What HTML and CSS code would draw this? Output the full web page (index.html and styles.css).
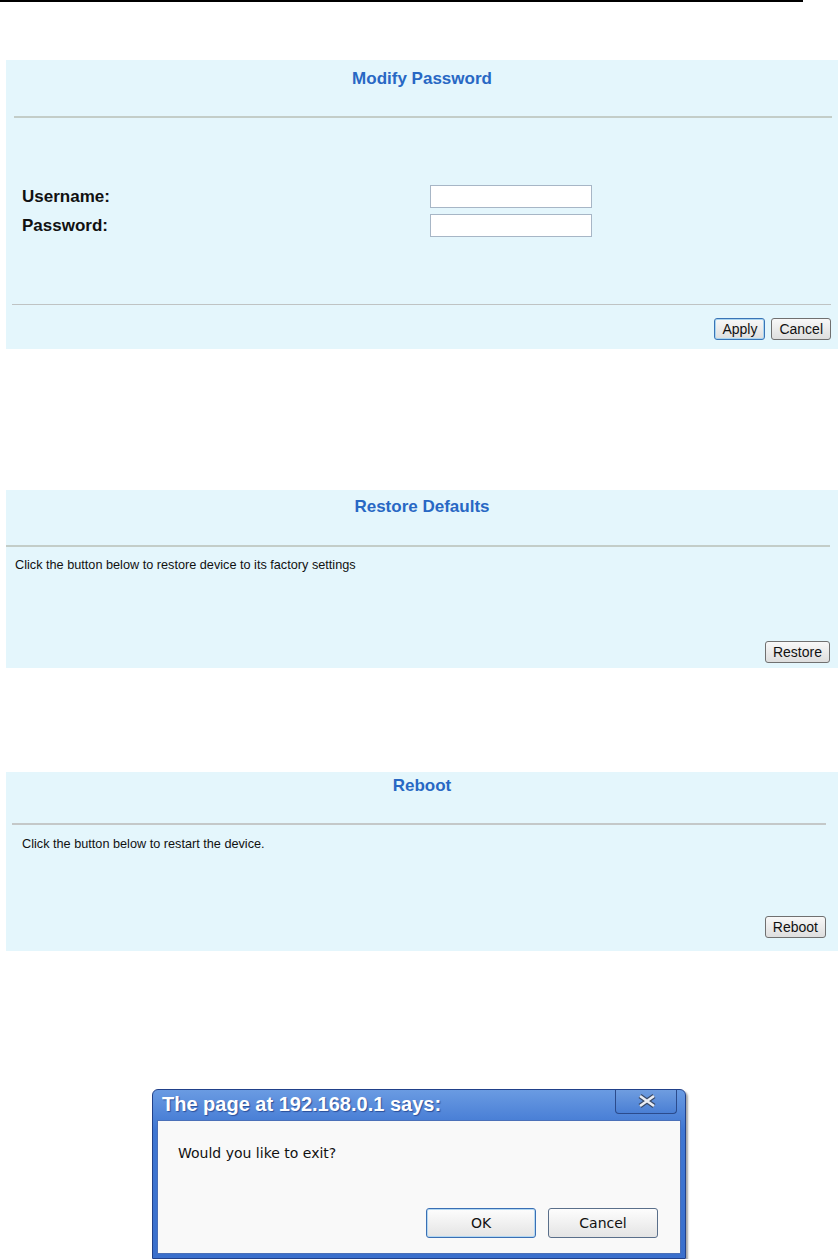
FILE: index.html
```html
<!DOCTYPE html>
<html>
<head>
    <title>Device Settings</title>
    <link rel="stylesheet" href="styles.css">
</head>
<body>
    <div class="page-rule"></div>

    <div class="panel panel-password">
        <div class="panel-title">Modify Password</div>
        <div class="divider divider-head"></div>
        <form class="field-grid" onsubmit="return false">
            <label for="username">Username:</label>
            <input type="text" id="username" name="username">
            <label for="password">Password:</label>
            <input type="password" id="password" name="password">
        </form>
        <div class="divider divider-foot"></div>
        <div class="panel-actions">
            <button class="btn btn-default">Apply</button>
            <button class="btn">Cancel</button>
        </div>
    </div>

    <div class="panel panel-restore">
        <div class="panel-title">Restore Defaults</div>
        <div class="divider"></div>
        <p class="panel-text">Click the button below to restore device to its factory settings</p>
        <div class="panel-actions">
            <button class="btn">Restore</button>
        </div>
    </div>

    <div class="panel panel-reboot">
        <div class="panel-title">Reboot</div>
        <div class="divider"></div>
        <p class="panel-text">Click the button below to restart the device.</p>
        <div class="panel-actions">
            <button class="btn">Reboot</button>
        </div>
    </div>

    <div class="dialog">
        <div class="dialog-title">
            <span>The page at 192.168.0.1 says:</span>
            <button class="dialog-close">
                <svg width="62" height="24" viewBox="0 0 62 24">
                    <path d="M24 6 L38 16 M38 6 L24 16" stroke="#3a4a68" stroke-width="5" fill="none"/>
                    <path d="M24 6 L38 16 M38 6 L24 16" stroke="#e9edf5" stroke-width="2.6" fill="none"/>
                </svg>
            </button>
        </div>
        <div class="dialog-body">
            <p class="dialog-message">Would you like to exit?</p>
            <div class="dialog-actions">
                <button class="dlg-btn dlg-btn-default">OK</button>
                <button class="dlg-btn">Cancel</button>
            </div>
        </div>
    </div>
</body>
</html>
```

FILE: styles.css
```css
body {
    margin: 0;
    background-color: #fff;
    font-family: 'Liberation Sans', Arial, sans-serif;
    color: #111;
}

.page-rule {
    width: 803px;
    border-top: 2px solid #000;
}

.panel {
    background-color: #e4f6fc;
    margin-left: 6px;
    width: 832px;
}

.panel-title {
    color: #2868c4;
    font-weight: bold;
    font-size: 17px;
    line-height: 20px;
    text-align: center;
}

.divider {
    height: 2px;
    background-color: #c3cdc8;
}

.panel-text {
    margin: 0;
    font-size: 12.7px;
    line-height: 16px;
    color: #111;
}

.panel-actions {
    display: flex;
    justify-content: flex-end;
    gap: 6px;
}

/* modify password */
.panel-password {
    margin-top: 58px;
    padding-top: 9px;
    padding-bottom: 9px;
}

.panel-password .divider-head {
    margin: 27px 6px 0 8px;
}

.field-grid {
    display: grid;
    grid-template-columns: 408px 162px;
    row-gap: 6px;
    align-items: center;
    padding: 67px 0 0 16px;
    margin: 0;
}

.field-grid label {
    font-weight: bold;
    font-size: 17px;
    color: #111;
}

.field-grid input {
    width: 162px;
    height: 23px;
    box-sizing: border-box;
    border: 1px solid #a7b6c6;
    background-color: #fff;
    margin: 0;
}

.panel-password .divider-foot {
    height: 1px;
    background-color: #bfc3c3;
    margin: 67px 7px 0 6px;
}

.panel-password .panel-actions {
    padding: 13px 7px 0 0;
}

/* restore defaults */
.panel-restore {
    margin-top: 141px;
    padding-top: 7px;
    padding-bottom: 5px;
}

.panel-restore .divider {
    margin: 28px 8px 0 0;
}

.panel-restore .panel-text {
    margin-top: 10px;
    padding-left: 9px;
}

.panel-restore .panel-actions {
    padding: 68px 8px 0 0;
}

/* reboot */
.panel-reboot {
    margin-top: 104px;
    padding-top: 4px;
    padding-bottom: 13px;
}

.panel-reboot .divider {
    margin: 27px 12px 0 6px;
    background-color: #c4c8c8;
}

.panel-reboot .panel-text {
    margin-top: 11px;
    padding-left: 16px;
}

.panel-reboot .panel-actions {
    padding: 64px 12px 0 0;
}

.btn {
    height: 22px;
    padding: 0 7px;
    font-family: 'Liberation Sans', Arial, sans-serif;
    font-size: 14px;
    color: #111;
    background: linear-gradient(#f8f8f8, #dedede);
    border: 1px solid #707070;
    border-radius: 3px;
}

.btn-default {
    border-color: #3a74b6;
    box-shadow: inset 0 0 0 1px #a9d4ef;
}

/* alert dialog */
.dialog {
    width: 534px;
    box-sizing: border-box;
    margin: 138px auto 0 auto;
    background: linear-gradient(#6a9be2, #3f76d2 40px, #3a6fcc);
    border: 1px solid #21418a;
    border-radius: 6px 6px 0 0;
    padding: 0 4px 4px 4px;
    box-shadow: 2px 2px 2px rgba(0, 0, 0, 0.35);
}

.dialog-title {
    height: 30px;
    display: flex;
    justify-content: space-between;
    align-items: flex-start;
    padding-left: 5px;
}

.dialog-title span {
    color: #fff;
    font-weight: bold;
    font-size: 20px;
    line-height: 28px;
    text-shadow: 1px 1px 1px #2a4f9a;
}

.dialog-close {
    width: 62px;
    height: 24px;
    padding: 0;
    margin-right: 4px;
    background: linear-gradient(#6f9de0, #4a7fd4);
    border: 1px solid #2b4b8c;
    border-top: none;
    border-radius: 0 0 4px 4px;
}

.dialog-close svg {
    display: block;
}

.dialog-body {
    background-color: #f9f9f9;
    border: 1px solid #4b70b8;
    padding: 23px 22px 15px 20px;
}

.dialog-message {
    margin: 0;
    font-family: 'DejaVu Sans', Tahoma, sans-serif;
    font-size: 14px;
    line-height: 18px;
    color: #111;
}

.dialog-actions {
    display: flex;
    justify-content: flex-end;
    gap: 12px;
    margin-top: 46px;
}

.dlg-btn {
    width: 110px;
    height: 30px;
    font-family: 'DejaVu Sans', Tahoma, sans-serif;
    font-size: 14px;
    color: #111;
    background: linear-gradient(#fdfdfd, #e4e4e4);
    border: 1px solid #5a6f8a;
    border-radius: 3px;
}

.dlg-btn-default {
    border-color: #3a6fb4;
    box-shadow: inset 0 0 0 1px #b4d8f2;
}
```
